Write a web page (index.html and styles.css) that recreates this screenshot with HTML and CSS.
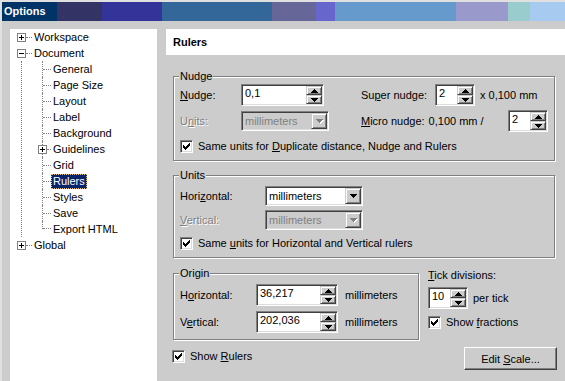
FILE: index.html
```html
<!DOCTYPE html>
<html lang="en">
<head>
    <meta charset="UTF-8">
    <title>Options</title>
    <link rel="stylesheet" href="styles.css">
</head>
<body>

<svg class="defs" xmlns="http://www.w3.org/2000/svg">
    <symbol id="up" viewBox="0 0 7 4"><path d="M3 0h1v1H3zM2 1h3v1H2zM1 2h5v1H1zM0 3h7v1H0z"/></symbol>
    <symbol id="down" viewBox="0 0 7 4"><path d="M0 0h7v1H0zM1 1h5v1H1zM2 2h3v1H2zM3 3h1v1H3z"/></symbol>
    <symbol id="check" viewBox="0 0 7 7"><path d="M6 0h1v3H6zM5 1h1v3H5zM4 2h1v3H4zM3 3h1v3H3zM2 4h1v3H2zM1 3h1v3H1zM0 2h1v3H0z"/></symbol>
    <symbol id="plus" viewBox="0 0 7 7"><path d="M1 3h5v1H1zM3 1h1v5H3z"/></symbol>
    <symbol id="minus" viewBox="0 0 7 7"><path d="M1 3h5v1H1z"/></symbol>
</svg>

<div class="window">
    <div class="titlebar">
        <div class="title">Options</div>
        <div class="band b1"></div>
        <div class="band b2"></div>
        <div class="band b3"></div>
        <div class="band b4"></div>
        <div class="band b5"></div>
        <div class="band b6"></div>
        <div class="band b7"></div>
        <div class="band b8"></div>
        <div class="band b9"></div>
    </div>

    <div class="main">
        <!-- category tree -->
        <div class="tree">
            <div class="node"><span class="box"><svg><use href="#plus"/></svg></span><span class="dash"></span><span class="label">Workspace</span></div>
            <div class="node"><span class="box"><svg><use href="#minus"/></svg></span><span class="dash"></span><span class="label">Document</span></div>
            <div class="children">
                <div class="node"><span class="branch"></span><span class="label">General</span></div>
                <div class="node"><span class="branch"></span><span class="label">Page Size</span></div>
                <div class="node"><span class="branch"></span><span class="label">Layout</span></div>
                <div class="node"><span class="branch"></span><span class="label">Label</span></div>
                <div class="node"><span class="branch"></span><span class="label">Background</span></div>
                <div class="node"><span class="branch"><span class="box inner"><svg><use href="#plus"/></svg></span></span><span class="label">Guidelines</span></div>
                <div class="node"><span class="branch"></span><span class="label">Grid</span></div>
                <div class="node"><span class="branch"></span><span class="label selected">Rulers</span></div>
                <div class="node"><span class="branch"></span><span class="label">Styles</span></div>
                <div class="node"><span class="branch"></span><span class="label">Save</span></div>
                <div class="node"><span class="branch last"></span><span class="label">Export HTML</span></div>
            </div>
            <div class="node"><span class="box"><svg><use href="#plus"/></svg></span><span class="dash"></span><span class="label">Global</span></div>
        </div>

        <!-- settings page -->
        <div class="page">
            <div class="page-title">Rulers</div>
            <div class="page-body">

                <div class="group nudge">
                    <div class="group-title">Nudge</div>
                    <div class="line first">
                        <span class="lbl w61"><u>N</u>udge:</span>
                        <div class="spin w83">
                            <span class="val">0,1</span>
                            <span class="arrows">
                                <span class="arr"><svg><use href="#up"/></svg></span>
                                <span class="arr"><svg><use href="#down"/></svg></span>
                            </span>
                        </div>
                        <span class="lbl w74 gap37">Su<u>p</u>er nudge:</span>
                        <div class="spin w40">
                            <span class="val">2</span>
                            <span class="arrows">
                                <span class="arr"><svg><use href="#up"/></svg></span>
                                <span class="arr"><svg><use href="#down"/></svg></span>
                            </span>
                        </div>
                        <span class="after">x 0,100 mm</span>
                    </div>
                    <div class="line">
                        <span class="lbl w61 disabled">U<u>n</u>its:</span>
                        <div class="select w88 off">
                            <span class="val">millimeters</span>
                            <span class="drop"><svg><use href="#down"/></svg></span>
                        </div>
                        <div class="micro gap32">
                            <span class="lbl"><u>M</u>icro nudge:</span>
                            <span class="lbl">0,100 mm /</span>
                        </div>
                        <div class="spin w40">
                            <span class="val">2</span>
                            <span class="arrows">
                                <span class="arr"><svg><use href="#up"/></svg></span>
                                <span class="arr"><svg><use href="#down"/></svg></span>
                            </span>
                        </div>
                    </div>
                    <div class="check-line">
                        <span class="check"><svg><use href="#check"/></svg></span>
                        <span>Same units for <u>D</u>uplicate distance, Nudge and Rulers</span>
                    </div>
                </div>

                <div class="group units">
                    <div class="group-title">Units</div>
                    <div class="line first">
                        <span class="lbl w85">Hori<u>z</u>ontal:</span>
                        <div class="select w98">
                            <span class="val">millimeters</span>
                            <span class="drop"><svg><use href="#down"/></svg></span>
                        </div>
                    </div>
                    <div class="line">
                        <span class="lbl w85 disabled"><u>V</u>ertical:</span>
                        <div class="select w98 off">
                            <span class="val">millimeters</span>
                            <span class="drop"><svg><use href="#down"/></svg></span>
                        </div>
                    </div>
                    <div class="check-line">
                        <span class="check"><svg><use href="#check"/></svg></span>
                        <span>Same <u>u</u>nits for Horizontal and Vertical rulers</span>
                    </div>
                </div>

                <div class="bottom">
                    <div class="left-col">
                        <div class="group origin">
                            <div class="group-title">Origin</div>
                            <div class="line first">
                                <span class="lbl w76">H<u>o</u>rizontal:</span>
                                <div class="spin w82">
                                    <span class="val">36,217</span>
                                    <span class="arrows">
                                        <span class="arr"><svg><use href="#up"/></svg></span>
                                        <span class="arr"><svg><use href="#down"/></svg></span>
                                    </span>
                                </div>
                                <span class="after unit">millimeters</span>
                            </div>
                            <div class="line">
                                <span class="lbl w76">V<u>e</u>rtical:</span>
                                <div class="spin w82">
                                    <span class="val">202,036</span>
                                    <span class="arrows">
                                        <span class="arr"><svg><use href="#up"/></svg></span>
                                        <span class="arr"><svg><use href="#down"/></svg></span>
                                    </span>
                                </div>
                                <span class="after unit">millimeters</span>
                            </div>
                        </div>
                        <div class="check-line show-rulers">
                            <span class="check"><svg><use href="#check"/></svg></span>
                            <span>Show <u>R</u>ulers</span>
                        </div>
                    </div>

                    <div class="tick-col">
                        <div class="tick-title"><u>T</u>ick divisions:</div>
                        <div class="tick-line">
                            <div class="spin w40">
                                <span class="val">10</span>
                                <span class="arrows">
                                    <span class="arr"><svg><use href="#up"/></svg></span>
                                    <span class="arr"><svg><use href="#down"/></svg></span>
                                </span>
                            </div>
                            <span class="after">per tick</span>
                        </div>
                        <div class="check-line fractions">
                            <span class="check"><svg><use href="#check"/></svg></span>
                            <span>Show <u>f</u>ractions</span>
                        </div>
                        <button class="btn">Edit <u>S</u>cale...</button>
                    </div>
                </div>

            </div>
        </div>
    </div>
</div>

</body>
</html>
```

FILE: styles.css
```css
body {
    margin: 0;
    background-color: #cccccc;
    font-family: "Liberation Sans", Arial, sans-serif;
    font-size: 11px;
    line-height: 13px;
    color: #000;
    overflow: hidden;
}
u {
    text-decoration-thickness: 1px;
    text-underline-offset: 1px;
}
.defs {
    display: none;
}
.window {
    height: 100vh;
    box-sizing: border-box;
    border-top: 2px solid #e0e0e0;
    border-left: 2px solid #e0e0e0;
    display: flex;
    flex-direction: column;
}

/* title bar */
.titlebar {
    display: flex;
    height: 19px;
}
.title {
    width: 55px;
    box-sizing: border-box;
    padding-left: 2px;
    background-color: #003366;
    color: #fff;
    font-weight: bold;
    line-height: 19px;
}
.b1 { width: 45px; background-color: #333366; }
.b2 { width: 60px; background-color: #333399; }
.b3 { width: 110px; background-color: #336699; }
.b4 { width: 44px; background-color: #666699; }
.b5 { width: 19px; background-color: #6666cc; }
.b6 { width: 121px; background-color: #6699cc; }
.b7 { width: 52px; background-color: #9999cc; }
.b8 { width: 22px; background-color: #99cccc; }
.b9 { flex: 1; background-color: #a6caf0; }

.main {
    flex: 1;
    display: flex;
    padding: 8px 0 0 8px;
    min-height: 0;
}

/* tree */
.tree {
    width: 149px;
    box-sizing: border-box;
    padding-left: 7px;
    background-color: #fff;
}
.node {
    display: flex;
    align-items: center;
    height: 16px;
}
.box {
    width: 9px;
    height: 9px;
    box-sizing: border-box;
    border: 1px solid #808080;
    background-color: #fff;
    display: flex;
}
.box svg {
    width: 7px;
    height: 7px;
    shape-rendering: crispEdges;
}
.dash {
    width: 6px;
    border-top: 1px dotted #808080;
}
.label {
    padding: 1px 2px;
    line-height: 13px;
    white-space: nowrap;
}
.label.selected {
    background-color: #0a246a;
    color: #fff;
    outline: 1px dotted #e6c27a;
    outline-offset: -1px;
}
.children {
    margin-left: 4px;
    padding-left: 20px;
    border-left: 1px dotted #808080;
}
.branch {
    width: 9px;
    height: 16px;
    box-sizing: border-box;
    border-left: 1px dotted #808080;
    display: flex;
    align-items: center;
}
.branch::after {
    content: "";
    flex: 1;
    border-top: 1px dotted #808080;
}
.branch.last {
    height: 8px;
    align-self: flex-start;
    align-items: flex-end;
}
.box.inner {
    margin-left: -5px;
}

/* page */
.page {
    flex: 1;
    margin-left: 9px;
}
.page-title {
    height: 26px;
    line-height: 26px;
    padding-left: 7px;
    background-color: #fff;
    font-weight: bold;
}
.page-body {
    padding: 0 10px 0 7px;
}
.group {
    border: 1px solid #808080;
    box-shadow: inset 1px 1px 0 #fff, 1px 1px 0 #fff;
    padding: 0 6px 7px 6px;
}
.group-title {
    display: table;
    margin: -7px 0 0 -1px;
    padding: 0 1px;
    background-color: #cccccc;
}
.nudge {
    margin-top: 21px;
}
.units {
    margin-top: 14px;
}
.origin {
    width: 246px;
    box-sizing: border-box;
    padding-bottom: 6px;
}
.line {
    display: flex;
    align-items: center;
    height: 22px;
    margin-top: 4px;
}
.line.first {
    margin-top: 1px;
}
.units .line {
    height: 20px;
    margin-top: 4px;
}
.origin .line {
    margin-top: 5px;
}
.origin .line.first {
    margin-top: 4px;
}
.lbl {
    white-space: nowrap;
}
.micro {
    width: 147px;
    display: flex;
    gap: 4px;
}
.w61 { width: 61px; }
.w74 { width: 74px; }
.w76 { width: 76px; }
.w85 { width: 85px; }
.gap32 { margin-left: 32px; }
.gap37 { margin-left: 37px; }
.disabled {
    color: #808080;
    text-shadow: 1px 1px 0 #fff;
}
.after {
    margin-left: 5px;
    white-space: nowrap;
}
.after.unit {
    margin-left: 7px;
}

/* sunken fields */
.spin, .select {
    display: flex;
    box-sizing: border-box;
    border: 1px solid;
    border-color: #808080 #fff #fff #808080;
    box-shadow: inset 1px 1px 0 #404040, inset -1px -1px 0 #dcdcdc;
    padding: 1px;
    background-color: #fff;
}
.spin {
    height: 22px;
}
.select {
    height: 20px;
}
.w40 { width: 40px; }
.w82 { width: 82px; }
.w83 { width: 83px; }
.w88 { width: 88px; }
.w98 { width: 98px; }
.val {
    flex: 1;
    padding-left: 2px;
    line-height: 15px;
    white-space: nowrap;
    overflow: hidden;
}
.select .val {
    line-height: 16px;
    padding-left: 2px;
}
.arrows {
    width: 16px;
    display: flex;
    flex-direction: column;
}
.arr, .drop {
    flex: 1;
    display: flex;
    align-items: center;
    justify-content: center;
    box-sizing: border-box;
    background-color: #cccccc;
    border: 1px solid;
    border-color: #cccccc #404040 #404040 #cccccc;
    box-shadow: inset 1px 1px 0 #fff, inset -1px -1px 0 #808080;
}
.drop {
    flex: none;
    width: 16px;
}
.arr svg, .drop svg {
    width: 7px;
    height: 4px;
    shape-rendering: crispEdges;
}
.select.off {
    background-color: #cccccc;
    color: #808080;
}
.select.off .drop svg {
    fill: #808080;
    filter: drop-shadow(1px 1px 0 #fff);
}

/* checkboxes */
.check-line {
    display: flex;
    align-items: center;
    height: 13px;
    margin-top: 8px;
    white-space: nowrap;
}
.units .check-line {
    margin-top: 7px;
}
.check {
    width: 13px;
    height: 13px;
    box-sizing: border-box;
    margin-right: 5px;
    border: 1px solid;
    border-color: #808080 #fff #fff #808080;
    box-shadow: inset 1px 1px 0 #404040, inset -1px -1px 0 #dcdcdc;
    background-color: #fff;
    display: flex;
    align-items: center;
    justify-content: center;
}
.check svg {
    width: 7px;
    height: 7px;
    shape-rendering: crispEdges;
}
.show-rulers {
    margin-top: 10px;
    margin-left: -1px;
}

/* bottom row */
.bottom {
    display: flex;
    align-items: flex-start;
    margin-top: 15px;
}
.tick-col {
    flex: 1;
    margin-left: 9px;
    display: flex;
    flex-direction: column;
}
.tick-title {
    margin-top: -4px;
}
.tick-line {
    display: flex;
    align-items: center;
    margin-top: 5px;
}
.fractions {
    margin-top: 7px;
}
.btn {
    align-self: flex-end;
    margin: 18px -2px 0 0;
    width: 93px;
    height: 23px;
    padding: 0;
    font-family: inherit;
    font-size: 11px;
    color: #000;
    background-color: #cccccc;
    border: 1px solid;
    border-color: #fff #404040 #404040 #fff;
    box-shadow: inset -1px -1px 0 #808080;
}
```
